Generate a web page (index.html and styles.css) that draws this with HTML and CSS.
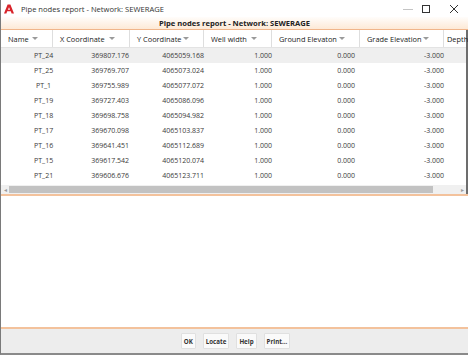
FILE: index.html
```html
<!DOCTYPE html>
<html lang="en">
<head>
    <meta charset="UTF-8">
    <title>Pipe nodes report - Network: SEWERAGE</title>
    <link rel="stylesheet" href="styles.css">
</head>
<body>
    <div class="janela">
        <div class="barra-titulo">
            <svg class="logo" width="10" height="10" viewBox="0 0 10 10">
                <polygon points="3.6,0.5 6.4,0.5 10,9.5 7.6,9.5 6.8,7.3 3.2,7.3 2.4,9.5 0,9.5" fill="#d8232a"/>
                <polygon points="5,3.2 6.1,5.8 3.9,5.8" fill="#fff"/>
            </svg>
            <span class="titulo">Pipe nodes report - Network: SEWERAGE</span>
            <div class="controles">
                <svg width="10" height="10" viewBox="0 0 10 10"><line x1="0" y1="5.5" x2="10" y2="5.5" stroke="#c4c4c4" stroke-width="1"/></svg>
                <svg width="10" height="10" viewBox="0 0 10 10"><rect x="1.5" y="1.5" width="7" height="7" fill="none" stroke="#333" stroke-width="1"/></svg>
                <svg width="10" height="10" viewBox="0 0 10 10"><path d="M1 1 L9 9 M9 1 L1 9" stroke="#333" stroke-width="1"/></svg>
            </div>
        </div>

        <div class="subtitulo">Pipe nodes report - Network: SEWERAGE</div>

        <div class="tabela">
            <div class="linha cabecalho">
                <div class="th"><span>Name</span><i></i></div>
                <div class="th"><span>X Coordinate</span><i></i></div>
                <div class="th"><span>Y Coordinate</span><i></i></div>
                <div class="th"><span>Well width</span><i></i></div>
                <div class="th"><span>Ground Elevaton</span><i></i></div>
                <div class="th"><span>Grade Elevation</span><i></i></div>
                <div class="th ultima"><span>Depth</span></div>
            </div>
            <div id="corpo"></div>
        </div>

        <div class="rolagem">
            <span class="seta">&#9666;</span>
            <div class="trilho"><div class="polegar"></div></div>
            <span class="seta">&#9656;</span>
        </div>

        <div class="vazio"></div>

        <div class="botoes">
            <button>OK</button>
            <button>Locate</button>
            <button>Help</button>
            <button>Print...</button>
        </div>
    </div>

    <script>
        // nós do relatório: nome, x, y
        const nos = [
            ['PT_24', '369807.176', '4065059.168'],
            ['PT_25', '369769.707', '4065073.024'],
            ['PT_1', '369755.989', '4065077.072'],
            ['PT_19', '369727.403', '4065086.096'],
            ['PT_18', '369698.758', '4065094.982'],
            ['PT_17', '369670.098', '4065103.837'],
            ['PT_16', '369641.451', '4065112.689'],
            ['PT_15', '369617.542', '4065120.074'],
            ['PT_21', '369606.676', '4065123.711']
        ];

        const corpo = document.getElementById('corpo');
        nos.forEach((no, i) => {
            const linha = document.createElement('div');
            linha.className = 'linha dados' + (i === 0 ? ' selecionada' : '');
            const valores = [no[0], no[1], no[2], '1.000', '0.000', '-3.000', ''];
            valores.forEach((v, c) => {
                const td = document.createElement('div');
                td.className = 'td c' + c;
                td.textContent = v;
                linha.appendChild(td);
            });
            corpo.appendChild(linha);
        });
    </script>
</body>
</html>
```

FILE: styles.css
```css
* { box-sizing: border-box; }

body {
    margin: 0;
    font-family: "Open Sans", "Noto Sans", sans-serif;
    color: #222;
    background: #fff;
}

.janela {
    width: 468px;
    height: 355px;
    display: flex;
    flex-direction: column;
    border-left: 1px solid #7a7a7a;
    border-bottom: 2px solid #8a8a8a;
    overflow: hidden;
}

/* barra de título */
.barra-titulo {
    height: 17px;
    display: flex;
    align-items: center;
    padding-left: 3px;
    background: #fff;
}

.logo { margin-right: 7px; }

.titulo {
    font-size: 7.6px;
    color: #333;
}

.controles {
    margin-left: auto;
    display: flex;
    gap: 8px;
    padding-right: 9px;
}

.controles svg:nth-child(2) { margin-right: 10px; }

.subtitulo {
    height: 13px;
    font-size: 7.6px;
    font-weight: bold;
    text-align: center;
    line-height: 12px;
    background: linear-gradient(#fffdfb, #fde9d6);
    border-bottom: 1px solid #f0b58a;
}

/* tabela */
.tabela {
    height: 155px;
    border-right: 2px solid #6d6d6d;
}

.linha {
    display: grid;
    grid-template-columns: 52px 77px 74px 68px 88px 84px 1fr;
}

.cabecalho {
    height: 18px;
    border-bottom: 1px solid #e3e3e3;
}

.th {
    display: flex;
    align-items: center;
    justify-content: space-between;
    padding: 0 14px 0 7px;
    font-size: 7.4px;
    color: #222;
    border-right: 1px solid #dedede;
    white-space: nowrap;
}

.th.ultima {
    border-right: none;
    padding: 0 0 0 3px;
}

.th i {
    width: 0;
    height: 0;
    border-left: 3px solid transparent;
    border-right: 3px solid transparent;
    border-top: 3px solid #9a9a9a;
}

.dados {
    height: 15px;
    font-size: 7px;
    color: #3a3a3a;
}

.selecionada { background: #efefef; }

.td {
    line-height: 15px;
    text-align: right;
    white-space: nowrap;
}

.c0 { text-align: center; padding-left: 33px; }
.c1 { padding-right: 1px; }
.c4 { padding-right: 5px; }

/* barra de rolagem horizontal */
.rolagem {
    height: 9px;
    display: flex;
    align-items: center;
    background: #f0f0f0;
    border-right: 2px solid #6d6d6d;
}

.seta {
    width: 8px;
    font-size: 6px;
    color: #999;
    text-align: center;
}

.trilho {
    flex: 1;
    height: 7px;
}

.polegar {
    width: 424px;
    height: 7px;
    background: #c2c2c2;
}

.vazio {
    flex: 1;
    background: #fff;
    border-top: 2px solid #f3c29c;
    border-bottom: 2px solid #f3c29c;
}

/* botões */
.botoes {
    height: 24px;
    display: flex;
    justify-content: center;
    align-items: center;
    gap: 7px;
    background: #ededed;
    padding-left: 2px;
}

.botoes button {
    height: 16px;
    padding: 0 2px;
    font-family: inherit;
    font-size: 6.2px;
    font-weight: bold;
    color: #333;
    background: #fafafa;
    border: 1px solid #e0e0e0;
    border-radius: 1px;
}
```
